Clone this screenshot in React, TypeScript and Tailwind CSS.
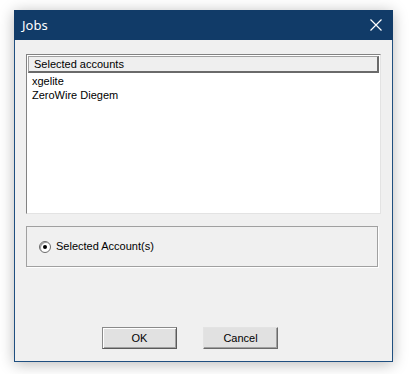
import React from "react";

export default function App() {
  const font = { fontFamily: '"Liberation Sans", Arial, sans-serif' };
  return (
    <div className="w-[409px] h-[374px] bg-white overflow-hidden pt-[10px] pl-[14px]" style={font}>
      <div className="w-[379px] h-[352px] flex flex-col bg-[#f0f0f0] border border-[#1f4f80] border-t-0 shadow-[0_2px_14px_rgba(0,0,0,0.28)]">
        {/* title bar */}
        <div className="h-[30px] bg-[#113b68] flex items-center justify-between pl-[8px] pr-[9px] -mx-px">
          <span className="text-white text-[13px] leading-none" style={{ fontFamily: '"Noto Sans", "Open Sans", sans-serif' }}>Jobs</span>
          <svg width="12" height="12" viewBox="0 0 12 12" className="mr-[2px]">
            <path d="M0.5 0.5 L11.5 11.5 M11.5 0.5 L0.5 11.5" stroke="white" strokeWidth="1.2" fill="none" />
          </svg>
        </div>
        {/* body */}
        <div className="flex-1 flex flex-col pl-[11px] pt-[14px]">
          {/* list */}
          <div className="w-[355px] h-[160px] bg-white border border-[#828282] border-r-[#e3e3e3] border-b-[#e3e3e3] p-[1px]">
            <div className="h-[17px] bg-[#efefef] border border-[#a0a0a0] border-r-[2px] border-b-[2px] border-r-[#6a6a6a] border-b-[#6a6a6a] text-[11px] leading-[14px] text-black pl-[5px]">
              Selected accounts
            </div>
            <div className="text-[11px] leading-[14px] text-black pl-[4px] pt-[1px]">
              <div>xgelite</div>
              <div>ZeroWire Diegem</div>
            </div>
          </div>
          {/* group */}
          <div className="mt-[12px] w-[352px] h-[41px] border border-[#a0a0a0] shadow-[1px_1px_0_#ffffff] flex items-center pl-[12px]">
            <div className="w-[12px] h-[12px] rounded-full bg-white border border-[#6b6b6b] flex items-center justify-center shadow-[inset_1px_1px_0_#a0a0a0]">
              <div className="w-[4px] h-[4px] rounded-full bg-black" />
            </div>
            <span className="ml-[5px] text-[11px] text-black">Selected Account(s)</span>
          </div>
          {/* buttons */}
          <div className="mt-[60px] flex gap-[26px] pl-[76px]">
            <button className="w-[75px] h-[22px] bg-[#e1e1e1] border border-[#8a8a8a] border-r-[#5a5a5a] border-b-[#5a5a5a] shadow-[inset_1px_1px_0_#ffffff,inset_-1px_-1px_0_#a0a0a0] text-[11px] text-black">
              OK
            </button>
            <button className="w-[75px] h-[22px] bg-[#e1e1e1] border border-[#e3e3e3] border-r-[#6a6a6a] border-b-[#6a6a6a] shadow-[inset_-1px_-1px_0_#a0a0a0] text-[11px] text-black">
              Cancel
            </button>
          </div>
        </div>
      </div>
    </div>
  );
}
